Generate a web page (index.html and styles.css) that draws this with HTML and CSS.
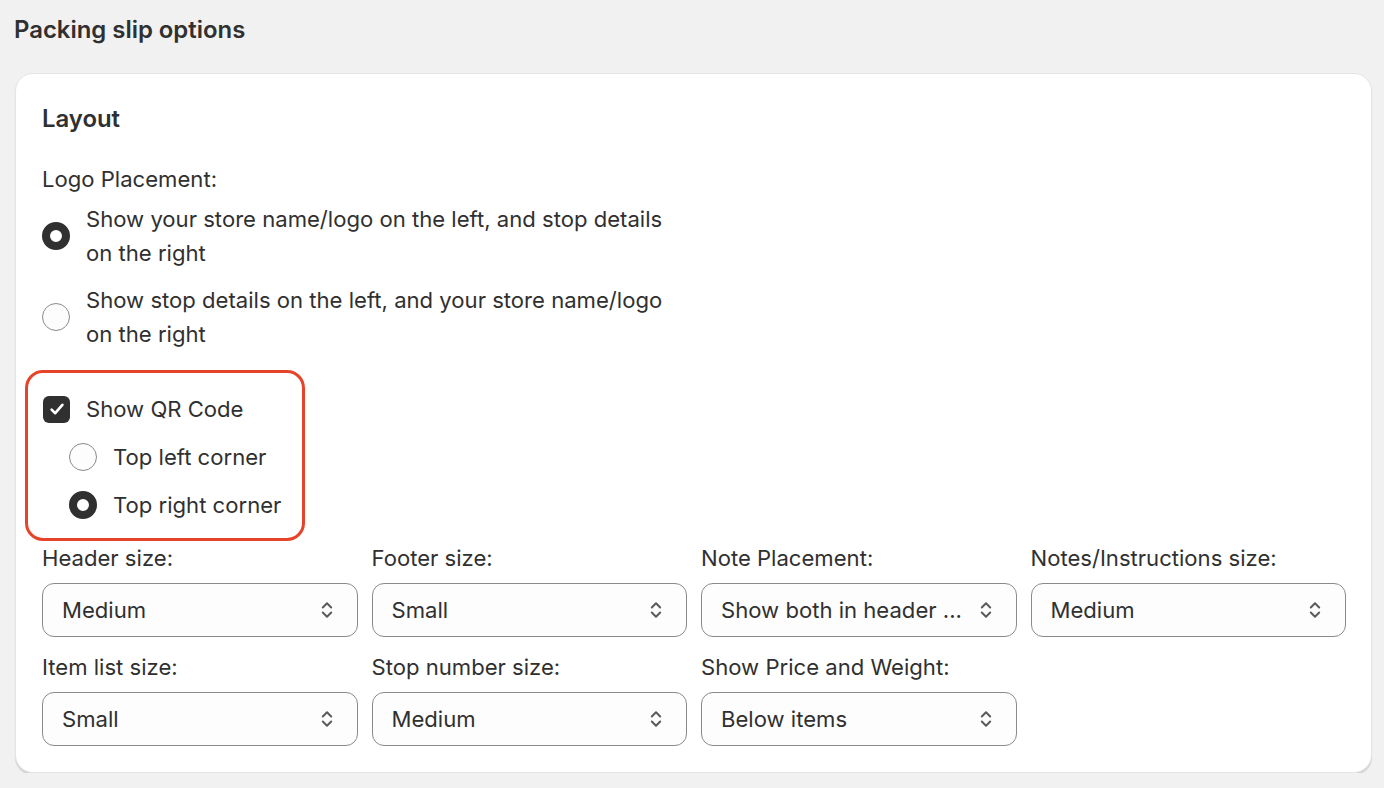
FILE: index.html
```html
<!DOCTYPE html>
<html>
<head>
<meta charset="utf-8">
<link rel="stylesheet" href="styles.css">
</head>
<body>
<div class="page">
  <h1 class="title">Packing slip options</h1>
  <div class="card">
    <h2 class="section">Layout</h2>
    <div class="label logo-label">Logo Placement:</div>
    <div class="choices">
      <div class="choice">
        <span class="radio checked"></span>
        <span class="choice-text">Show your store name/logo on the left, and stop details<br>on the right</span>
      </div>
      <div class="choice">
        <span class="radio"></span>
        <span class="choice-text">Show stop details on the left, and your store name/logo<br>on the right</span>
      </div>
    </div>
    <div class="qr-box">
      <div class="qr-row">
        <span class="checkbox">
          <svg viewBox="0 0 20 20" width="24" height="24"><path d="M5.5 10.5l3 3 6-7" fill="none" stroke="#fff" stroke-width="2.2" stroke-linecap="round" stroke-linejoin="round"/></svg>
        </span>
        <span class="choice-text">Show QR Code</span>
      </div>
      <div class="qr-row sub">
        <span class="radio"></span>
        <span class="choice-text">Top left corner</span>
      </div>
      <div class="qr-row sub">
        <span class="radio checked"></span>
        <span class="choice-text">Top right corner</span>
      </div>
    </div>
    <div class="grid">
      <div class="field">
        <div class="label">Header size:</div>
        <div class="select"><span>Medium</span><svg viewBox="0 0 20 20" width="28" height="28"><path d="M7 8.2l3-3 3 3M7 11.8l3 3 3-3" fill="none" stroke="#5a5a5a" stroke-width="1.4" stroke-linecap="round" stroke-linejoin="round"/></svg></div>
      </div>
      <div class="field">
        <div class="label">Footer size:</div>
        <div class="select"><span>Small</span><svg viewBox="0 0 20 20" width="28" height="28"><path d="M7 8.2l3-3 3 3M7 11.8l3 3 3-3" fill="none" stroke="#5a5a5a" stroke-width="1.4" stroke-linecap="round" stroke-linejoin="round"/></svg></div>
      </div>
      <div class="field">
        <div class="label">Note Placement:</div>
        <div class="select"><span>Show both in header ...</span><svg viewBox="0 0 20 20" width="28" height="28"><path d="M7 8.2l3-3 3 3M7 11.8l3 3 3-3" fill="none" stroke="#5a5a5a" stroke-width="1.4" stroke-linecap="round" stroke-linejoin="round"/></svg></div>
      </div>
      <div class="field">
        <div class="label">Notes/Instructions size:</div>
        <div class="select"><span>Medium</span><svg viewBox="0 0 20 20" width="28" height="28"><path d="M7 8.2l3-3 3 3M7 11.8l3 3 3-3" fill="none" stroke="#5a5a5a" stroke-width="1.4" stroke-linecap="round" stroke-linejoin="round"/></svg></div>
      </div>
      <div class="field">
        <div class="label">Item list size:</div>
        <div class="select"><span>Small</span><svg viewBox="0 0 20 20" width="28" height="28"><path d="M7 8.2l3-3 3 3M7 11.8l3 3 3-3" fill="none" stroke="#5a5a5a" stroke-width="1.4" stroke-linecap="round" stroke-linejoin="round"/></svg></div>
      </div>
      <div class="field">
        <div class="label">Stop number size:</div>
        <div class="select"><span>Medium</span><svg viewBox="0 0 20 20" width="28" height="28"><path d="M7 8.2l3-3 3 3M7 11.8l3 3 3-3" fill="none" stroke="#5a5a5a" stroke-width="1.4" stroke-linecap="round" stroke-linejoin="round"/></svg></div>
      </div>
      <div class="field">
        <div class="label">Show Price and Weight:</div>
        <div class="select"><span>Below items</span><svg viewBox="0 0 20 20" width="28" height="28"><path d="M7 8.2l3-3 3 3M7 11.8l3 3 3-3" fill="none" stroke="#5a5a5a" stroke-width="1.4" stroke-linecap="round" stroke-linejoin="round"/></svg></div>
      </div>
    </div>
  </div>
</div>
</body>
</html>
```

FILE: styles.css
```css
* { box-sizing: border-box; }
html, body {
  margin: 0;
  background: #f1f1f1;
  font-family: Inter, "Noto Sans", sans-serif;
  color: #303030;
}
.page {
  padding: 15px 12px 0 15px;
}
.title {
  margin: 0 0 28px -1px;
  font-size: 23.9px;
  line-height: 30px;
  font-weight: 600;
  color: #303030;
}
.card {
  background: #fff;
  border-radius: 18px;
  border: 1px solid #e4e4e4;
  box-shadow: 0 2px 1px rgba(0,0,0,0.13);
  padding: 30px 25px 26px 26px;
}
.section {
  margin: 0;
  font-size: 23.9px;
  line-height: 30px;
  font-weight: 600;
}
.label {
  font-size: 22.1px;
  line-height: 34px;
}
.logo-label { margin-top: 28px; }
.choices {
  display: flex;
  flex-direction: column;
  gap: 13px;
  margin-top: 6px;
}
.choice {
  display: flex;
  align-items: center;
  gap: 16px;
}
.choice-text {
  font-size: 22.1px;
  line-height: 34px;
}
.radio {
  flex: none;
  width: 28px;
  height: 28px;
  border-radius: 50%;
  border: 1px solid #8a8a8a;
  background: #fdfdfd;
}
.radio.checked {
  border: 8px solid #303030;
  background: #fff;
}
.checkbox {
  flex: none;
  width: 27px;
  height: 27px;
  margin-left: 1px;
  border-radius: 6px;
  background: #303030;
  display: flex;
  align-items: center;
  justify-content: center;
}
.qr-box {
  margin: 19px 0 0 -17px;
  width: 280px;
  border: 3px solid #e5432a;
  border-radius: 18px;
  padding: 19px 0 16px 14px;
  display: flex;
  flex-direction: column;
  gap: 14px;
}
.qr-row {
  display: flex;
  align-items: center;
  gap: 16px;
}
.qr-row.sub { padding-left: 27px; }
.grid {
  display: grid;
  grid-template-columns: repeat(4, 1fr);
  column-gap: 14px;
  row-gap: 13px;
}
.field {
  display: flex;
  flex-direction: column;
  gap: 8px;
}
.select {
  height: 54px;
  border: 1px solid #8a8a8a;
  border-radius: 12px;
  background: #fdfdfd;
  display: flex;
  align-items: center;
  justify-content: space-between;
  padding: 0 16px 0 19px;
  font-size: 22.1px;
}
.select span { white-space: nowrap; }
.select svg { flex: none; }
```
